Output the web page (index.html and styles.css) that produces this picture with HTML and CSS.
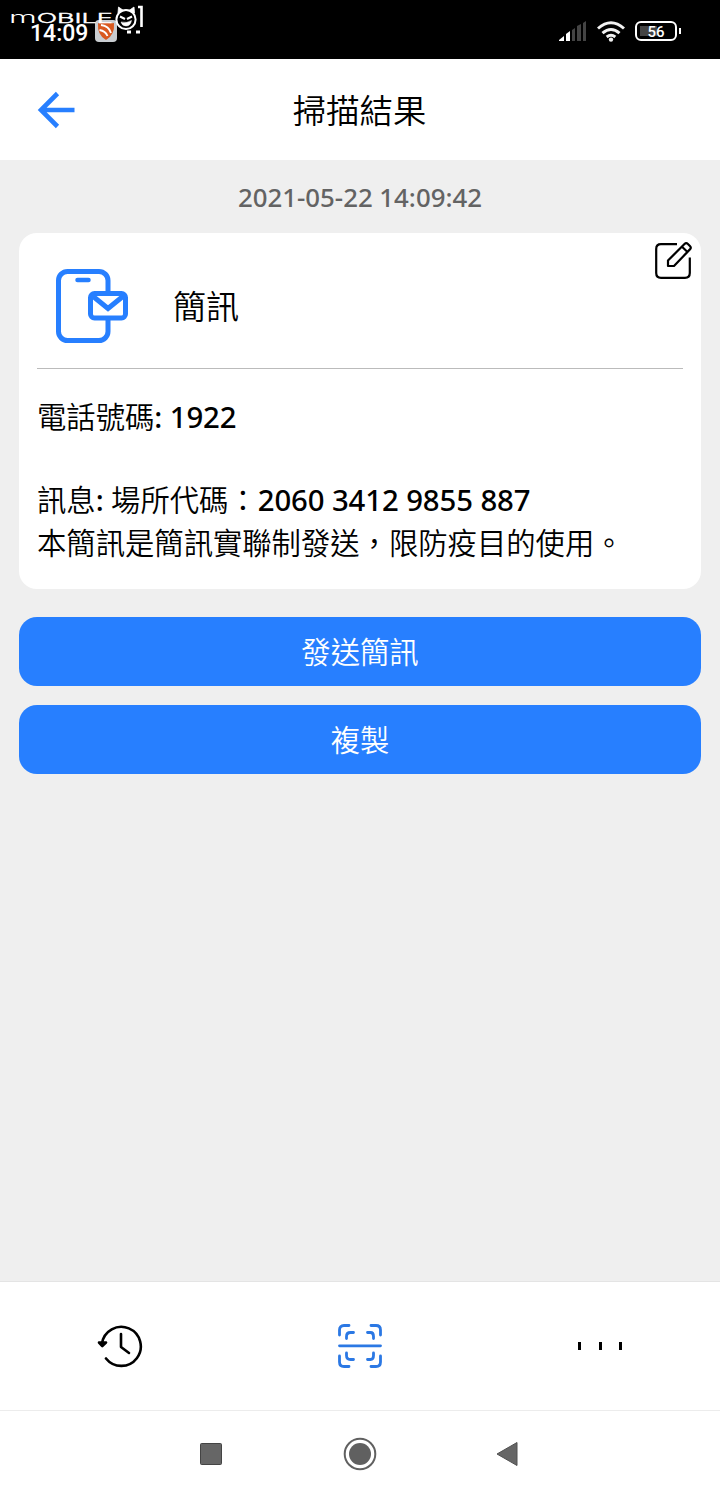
FILE: index.html
```html
<!DOCTYPE html>
<html lang="zh-Hant">

<head>
    <meta charset="UTF-8">
    <title>掃描結果</title>
    <link rel="stylesheet" href="styles.css">
</head>

<body>
    <!-- 狀態列 -->
    <div class="status">
        <span class="time">14:09</span>
        <svg class="shield" width="22" height="22" viewBox="0 0 22 22">
            <rect width="22" height="22" rx="4" fill="#c9cdd1"/>
            <path d="M3 3q4 1 8-1q4 2 8 1q1 12-8 17q-9-5-8-17z" fill="#d9591f"/>
            <path d="M6 5q8 1 10 8M4.500 10q6 1 8 6" fill="none" stroke="#fff" stroke-width="1.800"/>
        </svg>
        <div class="signals">
            <svg width="28" height="20" viewBox="0 0 28 20">
                <path d="M0 20v-1l5-4v5z" fill="#fff"/>
                <path d="M7 20v-7l4-3v10z" fill="#fff"/>
                <path d="M13 20v-11l3-2v13zM18 20v-15l4-2v17zM24 20v-18l3-2v20z" fill="#444"/>
            </svg>
            <svg width="28" height="21" viewBox="0 0 28 21" fill="none" stroke="#f2f2f2" stroke-width="3">
                <path d="M1 7.500q13-11.500 26 0M5.500 12.200q8.500-7.500 17 0M9.700 16q4.300-3.500 8.600 0"/>
                <circle cx="14" cy="18.600" r="2.200" fill="#f2f2f2" stroke="none"/>
            </svg>
            <div class="battery"><span>56</span></div>
        </div>
        <!-- 浮水印 -->
        <svg class="mark" width="140" height="34" viewBox="0 0 140 34">
            <text class="mark-text" transform="translate(1 22.500) scale(1.92 1)" textLength="54" lengthAdjust="spacingAndGlyphs"><tspan class="mark-m">m</tspan>OBILE</text>
            <g fill="none" stroke="#fff" stroke-width="2">
                <circle cx="118" cy="19.500" r="9.600"/>
                <path d="M110 13l.5-6 5 3.500zM121 10.500l5-3.500 .500 6z" fill="#fff" stroke-width=".8"/>
                <path d="M112 16.500l5 2.500M124 16.500l-5 2.500"/>
                <path d="M113 22q6 1.500 10.500-1.500q-1 5.500-5.500 5.500q-4 0-5-4z" fill="#fff" stroke-width=".5"/>
                <path d="M130 7h3.500v20" stroke-width="2.600"/>
                <path d="M119 32h4M128 32h4" stroke-width="3"/>
            </g>
        </svg>
    </div>

    <!-- 標題 -->
    <header class="header">
        <svg class="back" width="38" height="38" viewBox="0 0 38 38" fill="none" stroke="#277fff" stroke-width="4.600">
            <path d="M37.500 19H4M20.500 2.500L4 19l16.500 16.500"/>
        </svg>
        <h1>掃描結果</h1>
    </header>

    <main class="main">
        <p class="date">2021-05-22 14:09:42</p>
        <section class="card">
            <div class="card-head">
                <svg width="74" height="76" viewBox="0 0 74 76" fill="none" stroke="#277fff" stroke-width="5">
                    <rect x="3.500" y="3.500" width="49.500" height="69" rx="9"/>
                    <path d="M22.500 12h11" stroke-width="4.500" stroke-linecap="round"/>
                    <rect x="35.500" y="25.500" width="35" height="24.500" rx="4" fill="#fff"/>
                    <path d="M37 27.500l16 13 16-13"/>
                </svg>
                <h2>簡訊</h2>
                <svg class="edit" width="40" height="40" viewBox="0 0 40 40" fill="none" stroke="#000" stroke-width="2.200" stroke-linejoin="round">
                    <path d="M23 4.200H7q-4.800 0-4.800 4.800v24q0 4.800 4.800 4.800h24q4.800 0 4.800-4.800V17.500"/>
                    <path d="M14 20.500L30.500 4q1.700-1.700 3.400 0l2 2q1.700 1.700 0 3.400L20 26h-6zM28 6.700l5.500 5.300"/>
                </svg>
            </div>
            <div class="card-body">
                <p>電話號碼<b>: 1922</b></p>
                <p class="message">訊息<b>: </b>場所代碼：<b>2060 3412 9855 887</b><br>本簡訊是簡訊實聯制發送，限防疫目的使用。</p>
            </div>
        </section>
        <button class="btn">發送簡訊</button>
        <button class="btn">複製</button>
    </main>

    <!-- 底部選單 -->
    <nav class="tabs">
        <a>
            <svg width="46" height="44" viewBox="0 0 46 44" fill="none" stroke="#000" stroke-width="2.600" stroke-linecap="round" stroke-linejoin="round">
                <path d="M5 19.500A19.500 19.500 0 1 1 9 34.500"/>
                <path d="M2 18.500l3.300 3.500L9 18.500z" fill="#000"/>
                <path d="M24 10v13l8 6"/>
            </svg>
        </a>
        <a>
            <svg width="46" height="46" viewBox="0 0 46 46" fill="none" stroke="#2b78e4" stroke-width="2.800" stroke-linecap="round">
                <path d="M2.500 12V7q0-4.500 4.500-4.500h5M34 2.500h5q4.500 0 4.500 4.500v5M2.500 33v6q0 4.500 4.500 4.500h5M34 43.500h5q4.500 0 4.500-4.500v-6"/>
                <path d="M9.500 15.500v-2q0-4 4-4h3M30.500 9.500h3q3 0 3 4v2M9.500 30v2.500q0 4 4 4h3M30.500 36.500h3q3 0 3-4V30"/>
                <path d="M2.500 22.800h41"/>
            </svg>
        </a>
        <a class="more"><i></i><i></i><i></i></a>
    </nav>

    <!-- 系統導覽鍵 -->
    <div class="keys">
        <svg width="22" height="22" viewBox="0 0 22 22"><rect x=".5" y=".5" width="21" height="21" rx="1" fill="#666" stroke="#444"/></svg>
        <svg class="home" width="34" height="34" viewBox="0 0 34 34">
            <circle cx="17" cy="17" r="15.300" fill="none" stroke="#606060" stroke-width="2"/>
            <circle cx="17" cy="17" r="11" fill="#606060"/>
        </svg>
        <svg width="22" height="26" viewBox="0 0 22 26"><path d="M1 13L21 1.500v23z" fill="#666" stroke="#505050" stroke-linejoin="round"/></svg>
    </div>
</body>

</html>
```
FILE: styles.css
```css
* {
    margin: 0;
    padding: 0;
    box-sizing: border-box;
}

body {
    display: flex;
    flex-direction: column;
    height: 1497px;
    background: #efefef;
    color: #000;
    font-family: "Noto Sans", "Noto Sans CJK TC", sans-serif;
    overflow: hidden;
}

/* 狀態列 */

.status {
    position: relative;
    display: flex;
    align-items: center;
    height: 59px;
    padding: 4px 43px 0 30px;
    background: #000;
    color: #fff;
    font-family: Roboto, sans-serif;
}

.time {
    width: 65px;
    padding-top: 3px;
    font-size: 23px;
    font-weight: 500;
}

.shield {
    margin-bottom: 2px;
}

.signals {
    display: flex;
    align-items: center;
    gap: 10px;
    margin-left: auto;
    padding-bottom: 1px;
}

.battery {
    position: relative;
    width: 42px;
    height: 20px;
    border: 2px solid #fff;
    border-radius: 6px;
    background: linear-gradient(#444, #444) 3px 3px / 17px 10px no-repeat;
    font-size: 15px;
    font-weight: 500;
    line-height: 18px;
    text-align: center;
}

.battery::after {
    content: "";
    position: absolute;
    right: -6px;
    top: 5px;
    width: 2px;
    height: 6px;
    background: #fff;
}

.mark {
    position: absolute;
    left: 8px;
    top: 0;
}

.mark-text {
    fill: #fff;
    stroke: #fff;
    stroke-width: .4px;
    font: 300 13.5px Inter, sans-serif;
}

.mark-m {
    font-size: 16px;
    stroke-width: 0;
}

/* 標題 */

.header {
    display: flex;
    align-items: center;
    height: 101px;
    padding: 0 37px;
    background: #fff;
}

.header h1 {
    flex: 1;
    margin-right: 39px;
    font-size: 33.4px;
    font-weight: 350;
    line-height: 48px;
    text-align: center;
}

.main {
    flex: 1;
    padding: 0 19px;
}

.date {
    height: 73px;
    padding-top: 1px;
    color: #636363;
    font-size: 25.8px;
    font-weight: 500;
    line-height: 73px;
    text-align: center;
}

.card {
    height: 356px;
    margin-bottom: 28px;
    padding: 0 18px;
    border-radius: 18px;
    background: #fff;
}

.card-head {
    position: relative;
    display: flex;
    align-items: center;
    gap: 44px;
    height: 136px;
    padding: 10px 0 0 18px;
    border-bottom: 1px solid #bbb;
}

.card-head h2 {
    padding-top: 2px;
    font-size: 33px;
    font-weight: 350;
    line-height: 48px;
}

.edit {
    position: absolute;
    right: -11px;
    top: 7px;
}

.card-body {
    padding-top: 27px;
    font-size: 29.33px;
    font-weight: 350;
    line-height: 43px;
}

.card-body b {
    font-weight: 500;
    letter-spacing: -.1px;
}

.message {
    margin-top: 40px;
}

.btn {
    display: block;
    width: 100%;
    height: 69px;
    margin-bottom: 19px;
    padding-bottom: 2px;
    border: 0;
    border-radius: 18px;
    background: #277fff;
    color: #fff;
    font-family: inherit;
    font-size: 29.33px;
    font-weight: 350;
}

/* 底部選單 */

.tabs {
    display: flex;
    height: 130px;
    padding-bottom: 1px;
    border-top: 1px solid #e4e4e4;
    border-bottom: 1px solid #ececec;
    background: #fff;
}

.tabs a {
    flex: 1;
    display: flex;
    align-items: center;
    justify-content: center;
}

.more {
    gap: 17.5px;
}

.more i {
    width: 3px;
    height: 8px;
    background: #000;
}

.keys {
    display: flex;
    align-items: center;
    justify-content: space-between;
    height: 86px;
    padding: 0 202px 0 200px;
    background: #fff;
}

.home {
    margin-left: 2px;
}
```
